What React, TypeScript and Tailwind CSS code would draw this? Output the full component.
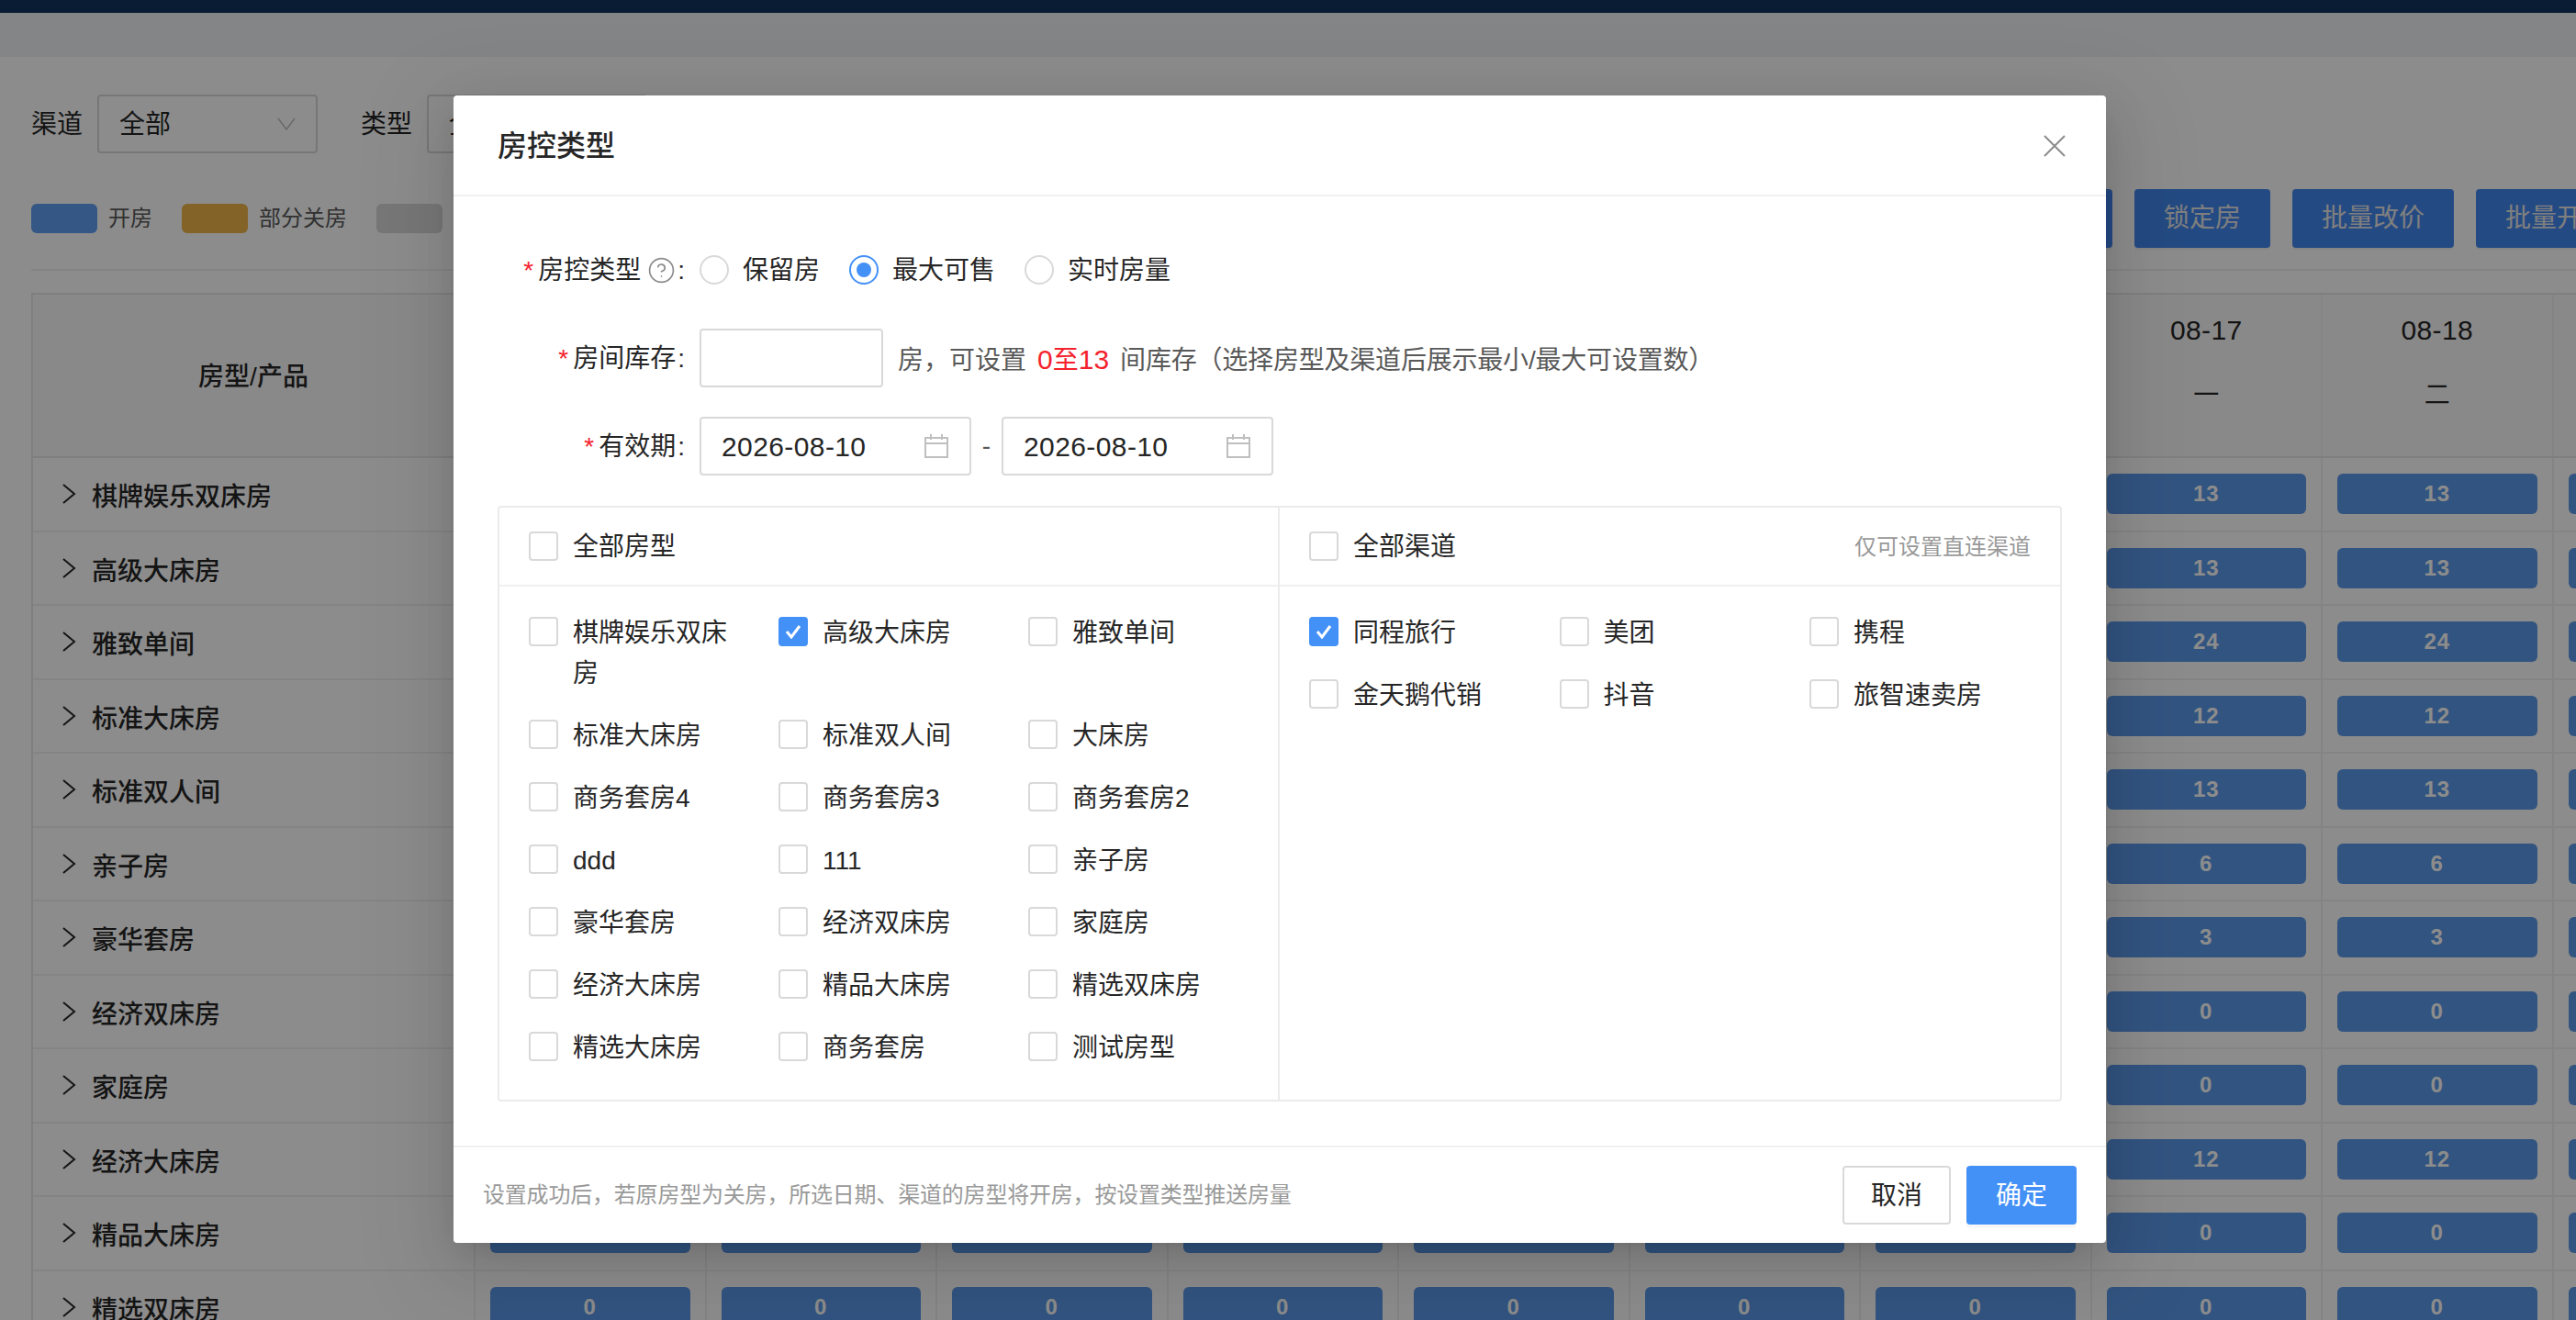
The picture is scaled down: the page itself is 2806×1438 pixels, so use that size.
import { CircleHelp } from "lucide-react";

const rooms: [string, number][] = [
    ["棋牌娱乐双床房", 13],
    ["高级大床房", 13],
    ["雅致单间", 24],
    ["标准大床房", 12],
    ["标准双人间", 13],
    ["亲子房", 6],
    ["豪华套房", 3],
    ["经济双床房", 0],
    ["家庭房", 0],
    ["经济大床房", 12],
    ["精品大床房", 0],
    ["精选双床房", 0],
    ["精选大床房", 0],
];

const days = [
    ["08-10", "一"],
    ["08-11", "二"],
    ["08-12", "三"],
    ["08-13", "四"],
    ["08-14", "五"],
    ["08-15", "六"],
    ["08-16", "日"],
    ["08-17", "一"],
    ["08-18", "二"],
    ["08-19", "三"],
];

const roomTypes = [
    "棋牌娱乐双床房", "高级大床房", "雅致单间",
    "标准大床房", "标准双人间", "大床房",
    "商务套房4", "商务套房3", "商务套房2",
    "ddd", "111", "亲子房",
    "豪华套房", "经济双床房", "家庭房",
    "经济大床房", "精品大床房", "精选双床房",
    "精选大床房", "商务套房", "测试房型",
];

const channels = ["同程旅行", "美团", "携程", "金天鹅代销", "抖音", "旅智速卖房"];

function Checkbox({ checked = false }: { checked?: boolean }) {
    if (checked) {
        return (
            <span className="flex h-8 w-8 shrink-0 items-center justify-center rounded bg-[#4390f7]">
                <svg width="18" height="16" viewBox="0 0 18 16" fill="none" stroke="#fff" strokeWidth="3">
                    <path d="M2 8l5 6 9-12" />
                </svg>
            </span>
        );
    }
    return <span className="h-8 w-8 shrink-0 rounded border-2 border-[#d9d9d9] bg-white" />;
}

function Radio({ checked = false, label }: { checked?: boolean; label: string }) {
    return (
        <div className="mr-8 flex items-center gap-[15px]">
            <span
                className={
                    checked
                        ? "flex h-8 w-8 items-center justify-center rounded-full border-2 border-[#4390f7]"
                        : "flex h-8 w-8 items-center justify-center rounded-full border-2 border-[#d9d9d9]"
                }
            >
                {checked && <span className="h-4 w-4 rounded-full bg-[#4390f7]" />}
            </span>
            <span className="pt-[2px]">{label}</span>
        </div>
    );
}

function FormLabel({ text, help }: { text: string; help?: boolean }) {
    return (
        <div className="mr-4 flex w-[204px] shrink-0 items-center justify-end">
            <span className="mr-[5px] pt-[2px] text-[#f5222d]">*</span>
            <span className="pt-[2px]">{text}</span>
            {help && <CircleHelp className="ml-[7px] text-[#8c8c8c]" size={31} strokeWidth={1.3} />}
            <span className="ml-[2px] pt-[2px]">:</span>
        </div>
    );
}

function DateInput() {
    return (
        <div className="flex h-16 w-[296px] items-center justify-between rounded border-2 border-[#d9d9d9] pl-[22px] pr-[22px]">
            <span className="text-[30px] tracking-[0.4px]">2026-08-10</span>
            <svg width="28" height="26" viewBox="0 0 28 26" fill="none" stroke="#bfbfbf" strokeWidth="2">
                <path d="M2 4h24v21H2zM2 10h24M8 0v6M20 0v6" />
            </svg>
        </div>
    );
}

function Option({ label, checked }: { label: string; checked?: boolean }) {
    return (
        <div className="flex items-start gap-4 pr-10">
            <span className="mt-[6px] flex">
                <Checkbox checked={checked} />
            </span>
            <span className="pt-[2px] leading-[44px]">{label}</span>
        </div>
    );
}

export default function App() {
    return (
        <div className="relative h-[1438px] w-[2806px] overflow-hidden bg-[#f0f2f5] font-['Liberation_Sans','Noto_Sans_CJK_SC',sans-serif] text-[28px] text-[#262626]">
            {/* 页面背景 */}
            <div className="h-[14px] bg-[#12335d]" />
            <div className="h-12" />
            <div className="h-full bg-white pl-[34px]">
                <div className="flex h-[144px] items-start pt-[41px]">
                    <div className="flex items-center">
                        <span className="pt-[2px]">渠道</span>
                        <div className="ml-4 flex h-16 w-[240px] items-center justify-between rounded border-2 border-[#d9d9d9] pl-[22px] pr-[22px]">
                            <span className="pt-[2px]">全部</span>
                            <svg width="20" height="14" viewBox="0 0 20 14" fill="none" stroke="#bfbfbf" strokeWidth="1.5">
                                <path d="M1 1l9 12 9-12" />
                            </svg>
                        </div>
                    </div>
                    <div className="ml-[47px] flex items-center">
                        <span className="pt-[2px]">类型</span>
                        <div className="ml-4 flex h-16 w-[240px] items-center rounded border-2 border-[#d9d9d9] pl-[22px]">
                            <span className="pt-[2px]">全部</span>
                        </div>
                    </div>
                </div>

                <div className="flex h-[89px] items-start border-b-2 border-[#f0f0f0]">
                    <div className="flex h-16 w-[2091px] shrink-0 items-center text-2xl text-[#595959]">
                        <span className="h-8 w-[72px] rounded-md bg-[#5f9ff2]" />
                        <span className="ml-3 mr-8">开房</span>
                        <span className="h-8 w-[72px] rounded-md bg-[#f0b44a]" />
                        <span className="ml-3 mr-8">部分关房</span>
                        <span className="h-8 w-[72px] rounded-md bg-[#d9d9d9]" />
                    </div>
                    <div className="flex shrink-0 gap-6 text-[#e8e8e8]">
                        {["关房设置", "锁定房", "批量改价", "批量开关房"].map((label) => (
                            <span key={label} className="flex h-16 items-center rounded bg-[#4287ee] px-8 shadow-[0_2px_0_rgba(0,0,0,0.05)]">
                                {label}
                            </span>
                        ))}
                    </div>
                </div>

                {/* 房态表格 */}
                <div className="mt-6 w-[2800px] border-l-2 border-t-2 border-[#e8e8e8]">
                    <div className="flex h-[178px] border-b-2 border-[#e8e8e8] bg-[#fafafa]">
                        <div className="flex w-[482px] shrink-0 items-center justify-center border-r-2 border-[#f0f0f0] pt-1 font-medium">
                            房型/产品
                        </div>
                        {days.map(([date, week]) => (
                            <div key={date} className="w-[251.5px] shrink-0 border-r-2 border-[#f0f0f0] pt-[19px] text-center">
                                <div className="text-[30px] leading-10 tracking-[0.4px]">{date}</div>
                                <div className="mt-[31px] leading-10">{week}</div>
                            </div>
                        ))}
                    </div>
                    {rooms.map(([name, count]) => (
                        <div key={name} className="flex h-[80.5px] border-b-2 border-[#f0f0f0]">
                            <div className="flex w-[482px] shrink-0 items-center border-r-2 border-[#f0f0f0] pl-8 font-medium">
                                <svg className="mr-[17px] shrink-0" width="15" height="22" viewBox="0 0 15 22" fill="none" stroke="#262626" strokeWidth="2">
                                    <path d="M1 1l12 10L1 21" />
                                </svg>
                                <span className="pt-2">{name}</span>
                            </div>
                            {days.map(([date]) => (
                                <div key={date} className="flex w-[251.5px] shrink-0 items-center justify-center border-r-2 border-[#f0f0f0] px-4">
                                    <span className="flex h-11 w-[218px] items-center justify-center rounded-md bg-[#5c9aea] text-2xl font-bold tracking-[1px] text-white">
                                        {count}
                                    </span>
                                </div>
                            ))}
                        </div>
                    ))}
                </div>
            </div>

            {/* 遮罩 */}
            <div className="absolute inset-0 bg-black/45" />

            {/* 房控类型弹窗 */}
            <div className="absolute left-[494px] top-[104px] w-[1800px] rounded-sm bg-white shadow-[0_12px_32px_-16px_rgba(0,0,0,0.16),0_18px_56px_0_rgba(0,0,0,0.1),0_24px_96px_32px_rgba(0,0,0,0.06)]">
                <div className="flex h-[110px] items-center justify-between border-b-2 border-[#f0f0f0] pl-12 pr-11">
                    <span className="pt-[2px] text-[32px] font-medium">房控类型</span>
                    <svg className="mt-[2px]" width="24" height="24" viewBox="0 0 24 24" fill="none" stroke="#8c8c8c" strokeWidth="2">
                        <path d="M1 1l22 22M23 1L1 23" />
                    </svg>
                </div>

                <div className="px-12 pt-12">
                    <div className="flex h-16 items-center">
                        <FormLabel text="房控类型" help />
                        <Radio label="保留房" />
                        <Radio label="最大可售" checked />
                        <Radio label="实时房量" />
                    </div>
                    <div className="mt-8 flex h-16 items-center">
                        <FormLabel text="房间库存" />
                        <div className="h-16 w-[200px] rounded border-2 border-[#d9d9d9]" />
                        <span className="ml-4 pt-[2px] text-[#595959]">
                            房，可设置<span className="mx-3 text-[30px] text-[#f5222d]">0<span className="text-[28px]">至</span>13</span><span className="tracking-[-0.2px]">间库存（选择房型及渠道后展示最小/最大可设置数）</span>
                        </span>
                    </div>
                    <div className="mt-8 flex h-16 items-center">
                        <FormLabel text="有效期" />
                        <DateInput />
                        <span className="w-[33px] text-center text-[#595959]">-</span>
                        <DateInput />
                    </div>

                    <div className="mt-[33px] flex h-[649px] rounded border-2 border-[#ebebeb]">
                        <div className="w-[850px] shrink-0 border-r-2 border-[#ebebeb]">
                            <div className="flex h-[86px] items-center gap-4 border-b-2 border-[#f0f0f0] pl-8">
                                <Checkbox />
                                <span className="pt-[2px]">全部房型</span>
                            </div>
                            <div className="grid grid-cols-[272px_272px_272px] gap-y-[22px] pl-8 pt-[27px]">
                                {roomTypes.map((label) => (
                                    <Option key={label} label={label} checked={label === "高级大床房"} />
                                ))}
                            </div>
                        </div>
                        <div className="flex-1">
                            <div className="flex h-[86px] items-center gap-4 border-b-2 border-[#f0f0f0] pl-8 pr-8">
                                <Checkbox />
                                <span className="pt-[2px]">全部渠道</span>
                                <span className="ml-auto pt-[2px] text-2xl text-[#999]">仅可设置直连渠道</span>
                            </div>
                            <div className="grid grid-cols-[272.5px_272.5px_272.5px] gap-y-[22px] pl-8 pt-[27px]">
                                {channels.map((label) => (
                                    <Option key={label} label={label} checked={label === "同程旅行"} />
                                ))}
                            </div>
                        </div>
                    </div>
                </div>

                <div className="mt-12 flex h-[106px] items-center border-t-2 border-[#f0f0f0] px-8">
                    <span className="text-2xl tracking-[-0.2px] text-[#999]">设置成功后，若原房型为关房，所选日期、渠道的房型将开房，按设置类型推送房量</span>
                    <span className="ml-auto flex h-16 w-[118px] items-center justify-center rounded border-2 border-[#d9d9d9] pt-[2px]">取消</span>
                    <span className="ml-[17px] flex h-16 w-[120px] items-center justify-center rounded bg-[#4390f7] pt-[2px] text-white shadow-[0_4px_0_rgba(0,0,0,0.03)]">确定</span>
                </div>
            </div>
        </div>
    );
}
